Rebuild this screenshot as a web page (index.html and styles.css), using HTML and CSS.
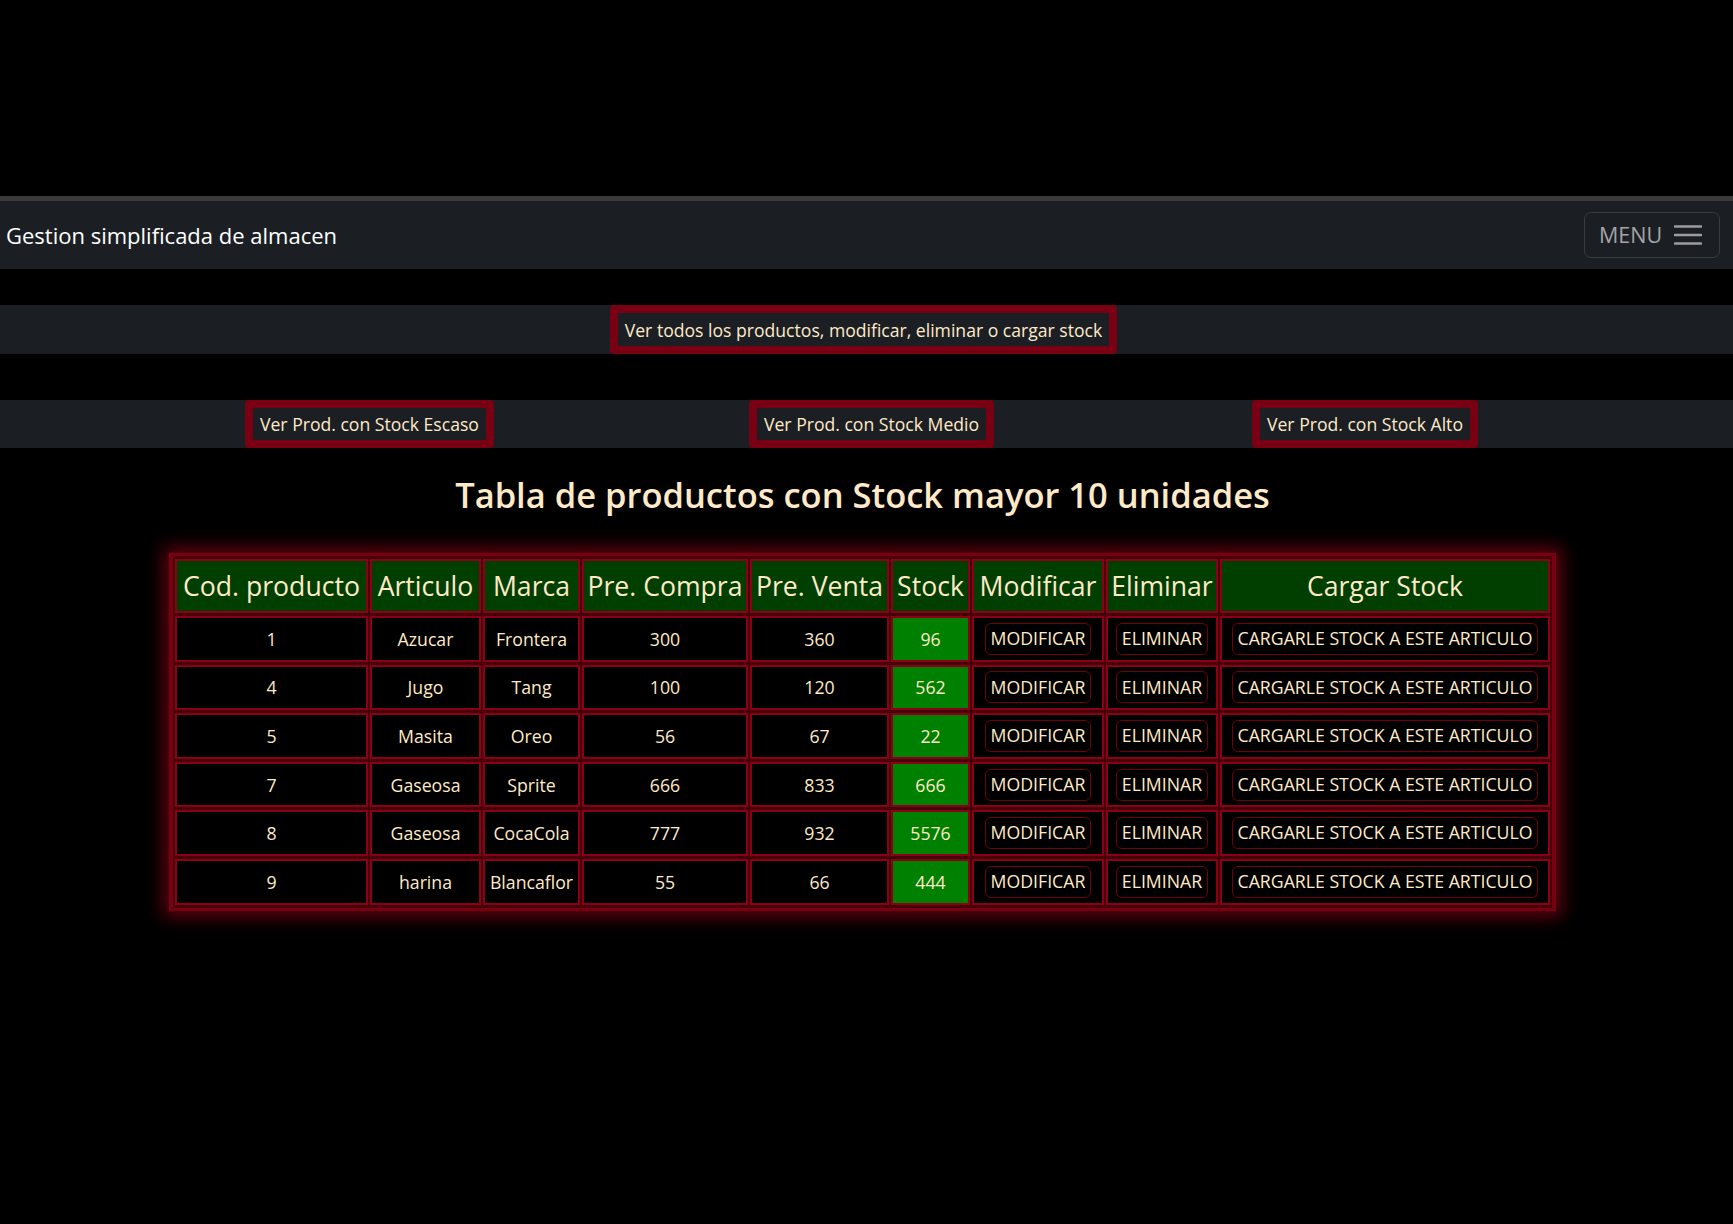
FILE: index.html
```html
<!DOCTYPE html>
<html lang="es">
<head>
<meta charset="utf-8">
<title>Gestion simplificada de almacen</title>
<link rel="stylesheet" href="styles.css">
</head>
<body>
<div class="topspace"></div>
<nav class="navbar">
  <span class="brand">Gestion simplificada de almacen</span>
  <button class="menu-btn" type="button">
    <span class="menu-text">MENU</span>
    <svg class="burger" width="28" height="22" viewBox="0 0 28 22" aria-hidden="true">
      <path d="M1 2.5h26M1 11h26M1 19.5h26" stroke="#9a9c9f" stroke-width="2.6" stroke-linecap="round" fill="none"/>
    </svg>
  </button>
</nav>

<div class="bar bar-one">
  <a class="nav-btn">Ver todos los productos, modificar, eliminar o cargar stock</a>
</div>

<div class="bar bar-two">
  <div class="cell"><a class="nav-btn">Ver Prod. con Stock Escaso</a></div>
  <div class="cell"><a class="nav-btn">Ver Prod. con Stock Medio</a></div>
  <div class="cell"><a class="nav-btn">Ver Prod. con Stock Alto</a></div>
</div>

<div class="content">
  <h2 class="title">Tabla de productos con Stock mayor 10 unidades</h2>
  <div class="table-wrap">
    <table class="products">
      <thead>
        <tr>
          <th class="c1">Cod. producto</th>
          <th class="c2">Articulo</th>
          <th class="c3">Marca</th>
          <th class="c4">Pre. Compra</th>
          <th class="c5">Pre. Venta</th>
          <th class="c6">Stock</th>
          <th class="c7">Modificar</th>
          <th class="c8">Eliminar</th>
          <th class="c9">Cargar Stock</th>
        </tr>
      </thead>
      <tbody>
        <tr><td>1</td><td>Azucar</td><td>Frontera</td><td>300</td><td>360</td><td class="stock">96</td><td><button class="act">MODIFICAR</button></td><td><button class="act">ELIMINAR</button></td><td><button class="act">CARGARLE STOCK A ESTE ARTICULO</button></td></tr>
        <tr><td>4</td><td>Jugo</td><td>Tang</td><td>100</td><td>120</td><td class="stock">562</td><td><button class="act">MODIFICAR</button></td><td><button class="act">ELIMINAR</button></td><td><button class="act">CARGARLE STOCK A ESTE ARTICULO</button></td></tr>
        <tr><td>5</td><td>Masita</td><td>Oreo</td><td>56</td><td>67</td><td class="stock">22</td><td><button class="act">MODIFICAR</button></td><td><button class="act">ELIMINAR</button></td><td><button class="act">CARGARLE STOCK A ESTE ARTICULO</button></td></tr>
        <tr><td>7</td><td>Gaseosa</td><td>Sprite</td><td>666</td><td>833</td><td class="stock">666</td><td><button class="act">MODIFICAR</button></td><td><button class="act">ELIMINAR</button></td><td><button class="act">CARGARLE STOCK A ESTE ARTICULO</button></td></tr>
        <tr><td>8</td><td>Gaseosa</td><td>CocaCola</td><td>777</td><td>932</td><td class="stock">5576</td><td><button class="act">MODIFICAR</button></td><td><button class="act">ELIMINAR</button></td><td><button class="act">CARGARLE STOCK A ESTE ARTICULO</button></td></tr>
        <tr><td>9</td><td>harina</td><td>Blancaflor</td><td>55</td><td>66</td><td class="stock">444</td><td><button class="act">MODIFICAR</button></td><td><button class="act">ELIMINAR</button></td><td><button class="act">CARGARLE STOCK A ESTE ARTICULO</button></td></tr>
      </tbody>
    </table>
  </div>
</div>
</body>
</html>
```

FILE: styles.css
```css
* { box-sizing: border-box; }

html, body {
  margin: 0;
  padding: 0;
  background: #000;
}

body {
  font-family: "Open Sans", "Noto Sans", "DejaVu Sans", sans-serif;
  color: #ffeac8;
  min-height: 1224px;
}

.topspace { height: 196px; }

.navbar {
  border-top: 5px solid #3a3a3a;
  background: #1b1f24;
  height: 73px;
  display: flex;
  align-items: center;
  justify-content: space-between;
  padding: 0 13px 0 6px;
}

.brand {
  color: #ffffff;
  font-size: 22px;
  line-height: 1;
}

.menu-btn {
  width: 136px;
  height: 46px;
  background: transparent;
  border: 1px solid #383c42;
  border-radius: 7px;
  display: flex;
  align-items: center;
  padding: 0 0 0 14px;
  gap: 12px;
  font-family: inherit;
  cursor: pointer;
}

.menu-text {
  color: #a2a4a7;
  font-size: 21.5px;
  line-height: 1;
}

.burger { display: block; }

.bar {
  background: #1b1f24;
}

.bar-one {
  margin-top: 36px;
  height: 49px;
  display: flex;
  justify-content: center;
  padding-right: 6px;
}

.bar-two {
  margin-top: 46px;
  height: 48px;
  display: grid;
  grid-template-columns: 504px 503px auto;
  padding-left: 245px;
}

.cell { display: flex; justify-content: flex-start; }

.nav-btn {
  display: flex;
  align-items: center;
  height: 100%;
  border: 8px solid #780012;
  border-radius: 4px;
  background: #1b1f24;
  color: #ffeac8;
  font-size: 17.6px;
  padding: 0 7px;
  white-space: nowrap;
  text-decoration: none;
}

.content {
  padding-right: 8px;
}

.title {
  margin: 27px 0 0;
  text-align: center;
  font-size: 34.5px;
  line-height: 40px;
  font-weight: 600;
  color: #ffeac8;
}

.table-wrap {
  width: fit-content;
  margin: 38px auto 0;
  background: #780012;
  padding: 3px 4px;
  box-shadow: 0 0 16px 6px rgba(110, 0, 16, 0.85);
}

.products {
  table-layout: fixed;
  width: 1379px;
  border-collapse: separate;
  border-spacing: 2px 3px;
  background: #46000a;
}

.products th,
.products td {
  border: 2px solid #8a0016;
  text-align: center;
  padding: 0;
  white-space: nowrap;
  overflow: hidden;
}

.products th {
  background: #003f00;
  height: 54px;
  font-size: 26.6px;
  font-weight: 400;
  color: #ffeac8;
  line-height: 50px;
}

.products td {
  background: #000;
  height: 45.6px;
  font-size: 17.7px;
  color: #ffeac8;
  vertical-align: middle;
}

.products td.stock { background: #008000; }

.c1 { width: 193px; }
.c2 { width: 111px; }
.c3 { width: 97px; }
.c4 { width: 166px; }
.c5 { width: 139px; }
.c6 { width: 79px; }
.c7 { width: 132px; }
.c8 { width: 112px; }
.c9 { width: 330px; }

.act {
  font-family: inherit;
  font-size: 17.7px;
  color: #ffeac8;
  background: #000;
  border: 1px solid #6e0012;
  border-radius: 6px;
  height: 32px;
  padding: 0 5px;
  line-height: 1;
  cursor: pointer;
}
```
